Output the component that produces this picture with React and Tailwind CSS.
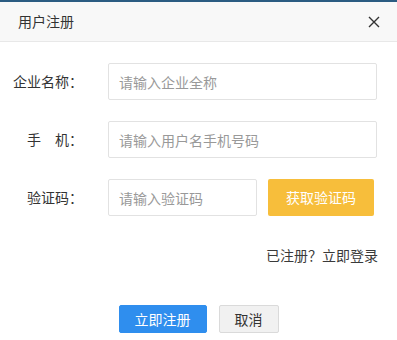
import React from 'react';

const font = { fontFamily: '"Noto Sans CJK SC", "Noto Sans", sans-serif' };

const Row = ({ label, children }) => (
  <div className="flex items-center">
    <div className="w-[83px] text-right text-[14px] text-[#333] whitespace-pre">{label}</div>
    <div className="ml-[25px] flex items-center">{children}</div>
  </div>
);

const Field = ({ placeholder, width }) => (
  <input
    placeholder={placeholder}
    className={`h-[37px] ${width} border border-[#e2e2e2] rounded-[2px] pl-[10px] text-[14px] text-[#333] placeholder:text-[#999] outline-none bg-white`}
  />
);

export default function App() {
  return (
    <div className="w-[397px] h-[340px] bg-white overflow-hidden" style={font}>
      <div className="h-[2px] bg-[#2b5c82]" />
      {/* Header */}
      <div className="h-[40px] bg-[#f8f8f8] border-b border-[#e8e8e8] flex items-center justify-between pl-[18px] pr-[17px]">
        <span className="text-[14px] text-[#333]">用户注册</span>
        <svg width="12" height="12" viewBox="0 0 12 12" className="text-[#333]">
          <path d="M1 1L11 11M11 1L1 11" stroke="currentColor" strokeWidth="1.4" />
        </svg>
      </div>

      {/* Form */}
      <div className="pt-[21px] flex flex-col gap-[21px]">
        <Row label="企业名称：">
          <Field placeholder="请输入企业全称" width="w-[269px]" />
        </Row>
        <Row label="手　机：">
          <Field placeholder="请输入用户名手机号码" width="w-[269px]" />
        </Row>
        <Row label="验证码：">
          <Field placeholder="请输入验证码" width="w-[149px]" />
          <button className="ml-[11px] h-[37px] w-[106px] rounded-[2px] bg-[#f7be3b] text-white text-[14px]">
            获取验证码
          </button>
        </Row>
      </div>

      <div className="mt-[29px] pr-[19px] text-right text-[14px] text-[#3a3a3a]">已注册？立即登录</div>

      <div className="mt-[39px] flex justify-center gap-[12px]">
        <button className="h-[28px] w-[88px] rounded-[2px] bg-[#2f8eee] border border-[#2f8eee] text-white text-[14px]">
          立即注册
        </button>
        <button className="h-[28px] w-[60px] rounded-[2px] bg-[#f1f1f1] border border-[#dadada] text-[#333] text-[14px]">
          取消
        </button>
      </div>
    </div>
  );
}
